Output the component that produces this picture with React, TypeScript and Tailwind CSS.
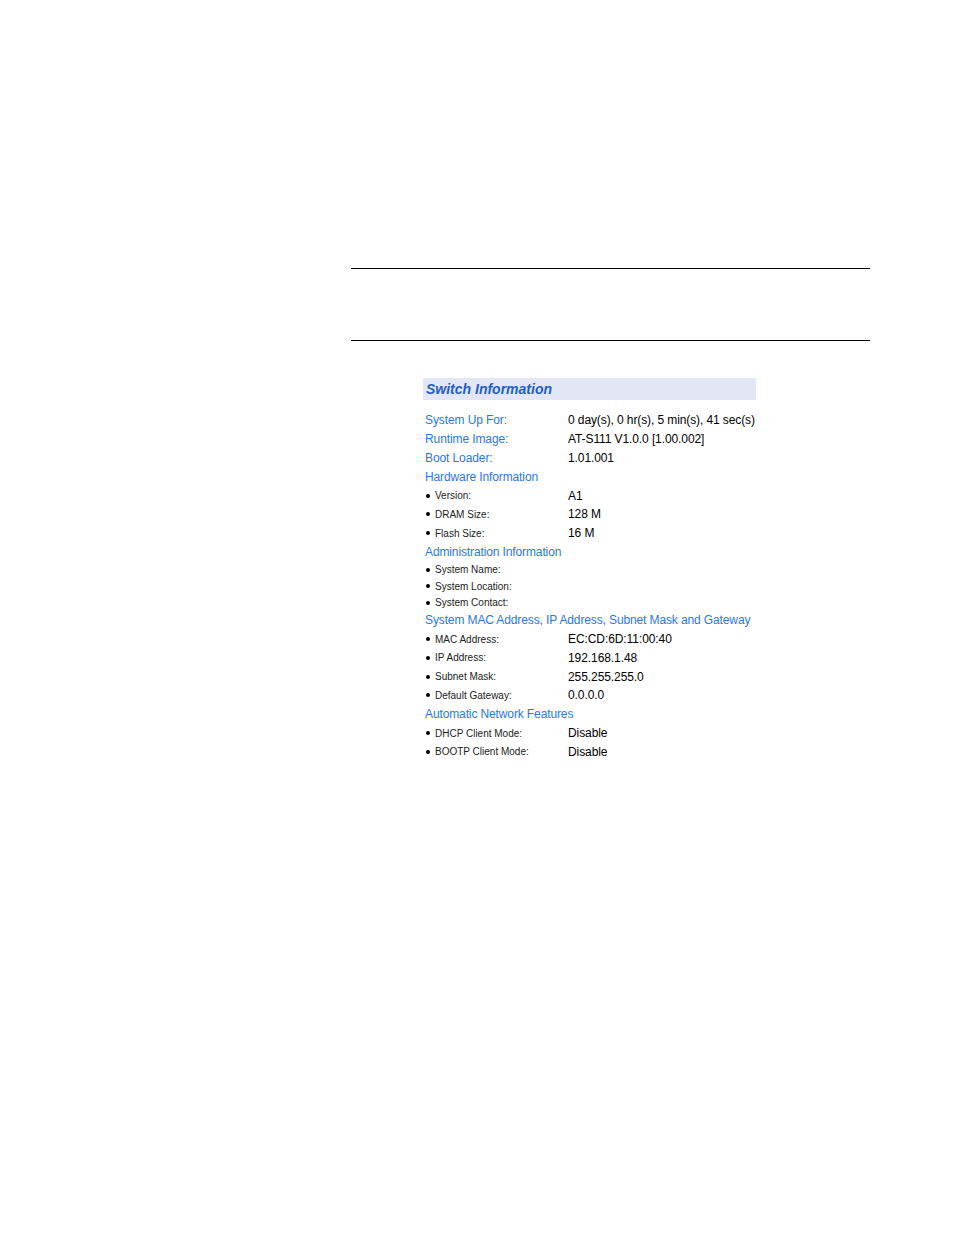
const top = [
  { label: "System Up For:", value: "0 day(s), 0 hr(s), 5 min(s), 41 sec(s)" },
  { label: "Runtime Image:", value: "AT-S111 V1.0.0 [1.00.002]" },
  { label: "Boot Loader:", value: "1.01.001" },
];

const hardware = [
  { label: "Version:", value: "A1" },
  { label: "DRAM Size:", value: "128 M" },
  { label: "Flash Size:", value: "16 M" },
];

const admin = ["System Name:", "System Location:", "System Contact:"];

const network = [
  { label: "MAC Address:", value: "EC:CD:6D:11:00:40" },
  { label: "IP Address:", value: "192.168.1.48" },
  { label: "Subnet Mask:", value: "255.255.255.0" },
  { label: "Default Gateway:", value: "0.0.0.0" },
];

const auto = [
  { label: "DHCP Client Mode:", value: "Disable" },
  { label: "BOOTP Client Mode:", value: "Disable" },
];

function Section({ title }: { title: string }) {
  return (
    <div className="flex h-[18.8px] items-center whitespace-nowrap text-[12px] tracking-[-0.12px] text-[#2a78e4]">
      {title}
    </div>
  );
}

function Bullet({ label, value, short }: { label: string; value?: string; short?: boolean }) {
  return (
    <div className={`grid grid-cols-[143px_1fr] items-center whitespace-nowrap ${short ? "h-[16.5px]" : "h-[18.8px]"}`}>
      <div className="flex items-center text-[10px] text-[#222]">
        <span className="ml-[1px] mr-[5px] h-[4px] w-[4px] rounded-full bg-black" />
        {label}
      </div>
      {value && <div className="text-[12px] tracking-[-0.08px] text-black">{value}</div>}
    </div>
  );
}

export default function App() {
  return (
    <div className="min-h-[1235px] bg-white pt-[268px] font-['Liberation_Sans',Arial,sans-serif]">
      <div className="ml-[351px] w-[519px]">
        <div className="h-[72px] border-t border-black" />
        <div className="border-t border-black" />
      </div>

      <div className="ml-[423px] mt-[37px] w-[333px]">
        <div className="flex h-[22px] items-center bg-[#e3e6f4] pl-[3px] text-[14px] font-bold italic text-[#1d5ec8]">
          Switch Information
        </div>

        <div className="mt-[11px] pl-[2px]">
          {top.map((r) => (
            <div key={r.label} className="grid h-[18.8px] grid-cols-[143px_1fr] items-center whitespace-nowrap text-[12px] tracking-[-0.1px]">
              <div className="text-[#2a78e4]">{r.label}</div>
              <div className="text-black">{r.value}</div>
            </div>
          ))}
          <Section title="Hardware Information" />
          {hardware.map((r) => (
            <Bullet key={r.label} label={r.label} value={r.value} />
          ))}
          <Section title="Administration Information" />
          {admin.map((l) => (
            <Bullet key={l} label={l} short />
          ))}
          <Section title="System MAC Address, IP Address, Subnet Mask and Gateway" />
          {network.map((r) => (
            <Bullet key={r.label} label={r.label} value={r.value} />
          ))}
          <Section title="Automatic Network Features" />
          {auto.map((r) => (
            <Bullet key={r.label} label={r.label} value={r.value} />
          ))}
        </div>
      </div>
    </div>
  );
}
